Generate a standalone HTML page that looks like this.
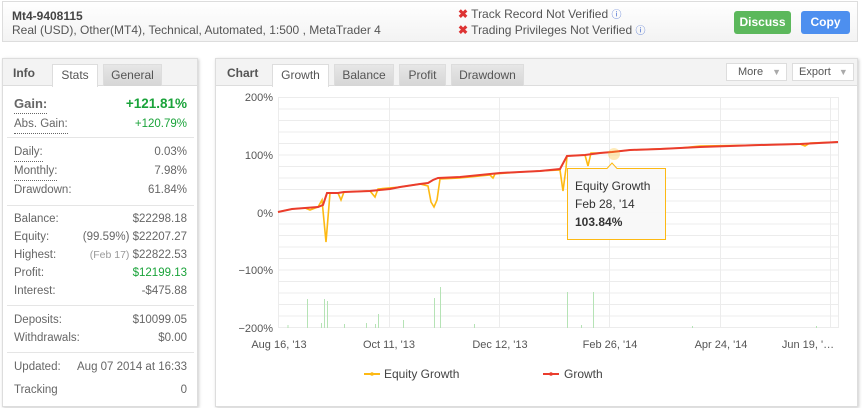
<!DOCTYPE html>
<html><head><meta charset="utf-8"><style>
*{box-sizing:border-box;margin:0;padding:0}
body{width:862px;height:408px;background:#fff;font-family:"Liberation Sans",Arial,sans-serif;font-size:12px;color:#555;position:relative;overflow:hidden}
.abs{position:absolute}
.hdr{left:2px;top:1px;width:856px;height:41px;border:1px solid #ddd;background:linear-gradient(#fff,#f3f3f3)}
.panel{border:1px solid #ddd;background:#fff;box-shadow:1px 1px 3px #ccc}
.tabbar{left:0;top:0;right:0;height:27px;background:#f3f3f3;border-bottom:1px solid #ddd}
.tab{position:absolute;top:5px;height:22px;background:linear-gradient(#e6e6e6,#d6d6d6);border:1px solid #ddd;border-bottom:none;text-align:center;line-height:21px;color:#555}
.tab.on{background:#fff;height:23px}
.row{position:absolute;left:11px;width:173px;height:18px;line-height:18px;font-size:11.5px}
.row .l{position:absolute;left:0;color:#666}
.row .r{position:absolute;right:0;color:#666}
.dot{border-bottom:1px dotted #666}
.sep{position:absolute;left:4px;width:187px;border-top:1px solid #e5e5e5}
.row .g{color:#1aa33a}
</style></head><body>
<div class="abs hdr">
 <div class="abs" style="left:9px;top:7px;font-weight:bold;font-size:12px;color:#444">Mt4-9408115</div>
 <div class="abs" style="left:9px;top:21px;font-size:12px;color:#555">Real (USD), Other(MT4), Technical, Automated, 1:500 , MetaTrader 4</div>
 <div class="abs" style="left:455px;top:4px;font-size:12px;color:#555"><span style="color:#d33;font-weight:bold">✖</span> Track Record Not Verified <span style="color:#4a6fd0;font-size:10px">ⓘ</span></div>
 <div class="abs" style="left:455px;top:20px;font-size:12px;color:#555"><span style="color:#d33;font-weight:bold">✖</span> Trading Privileges Not Verified <span style="color:#4a6fd0;font-size:10px">ⓘ</span></div>
 <div class="abs" style="left:731px;top:9px;width:57px;height:23px;background:#5cb85c;border-radius:3px;color:#fff;font-weight:bold;text-align:center;line-height:23px;font-size:12px">Discuss</div>
 <div class="abs" style="left:798px;top:9px;width:49px;height:23px;background:#4d8fef;border-radius:3px;color:#fff;font-weight:bold;text-align:center;line-height:23px;font-size:12px">Copy</div>
</div>

<div class="abs panel" style="left:2px;top:58px;width:196px;height:349px">
 <div class="abs tabbar"></div>
 <div class="abs" style="left:10px;top:7px;font-weight:bold;color:#555;font-size:12px">Info</div>
 <div class="tab on" style="left:49px;width:46px">Stats</div>
 <div class="tab" style="left:100px;width:59px">General</div>
 <div class="row" style="top:36px;height:20px"><span class="l dot" style="font-weight:bold;font-size:13px;color:#666;line-height:18px">Gain:</span><span class="r g" style="font-weight:bold;font-size:13.5px">+121.81%</span></div>
 <div class="row" style="top:56px"><span class="l dot">Abs. Gain:</span><span class="r g">+120.79%</span></div>
 <div class="sep" style="top:78px"></div>
 <div class="row" style="top:84px"><span class="l dot">Daily:</span><span class="r">0.03%</span></div>
 <div class="row" style="top:103px"><span class="l dot">Monthly:</span><span class="r">7.98%</span></div>
 <div class="row" style="top:122px"><span class="l">Drawdown:</span><span class="r">61.84%</span></div>
 <div class="sep" style="top:146px"></div>
 <div class="row" style="top:151px"><span class="l">Balance:</span><span class="r">$22298.18</span></div>
 <div class="row" style="top:169px"><span class="l">Equity:</span><span class="r">(99.59%) $22207.27</span></div>
 <div class="row" style="top:187px"><span class="l">Highest:</span><span class="r"><span style="color:#999;font-size:10.5px">(Feb 17)</span> $22822.53</span></div>
 <div class="row" style="top:205px"><span class="l">Profit:</span><span class="r g">$12199.13</span></div>
 <div class="row" style="top:223px"><span class="l">Interest:</span><span class="r">-$475.88</span></div>
 <div class="sep" style="top:246px"></div>
 <div class="row" style="top:252px"><span class="l">Deposits:</span><span class="r">$10099.05</span></div>
 <div class="row" style="top:270px"><span class="l">Withdrawals:</span><span class="r">$0.00</span></div>
 <div class="sep" style="top:293px"></div>
 <div class="row" style="top:299px"><span class="l">Updated:</span><span class="r">Aug 07 2014 at 16:33</span></div>
 <div class="row" style="top:322px"><span class="l">Tracking</span><span class="r">0</span></div>
</div>

<div class="abs panel" style="left:215px;top:58px;width:643px;height:349px">
 <div class="abs tabbar"></div>
 <div class="abs" style="left:11px;top:7px;font-weight:bold;color:#555">Chart</div>
 <div class="tab on" style="left:56px;width:57px">Growth</div>
 <div class="tab" style="left:118px;width:60px">Balance</div>
 <div class="tab" style="left:183px;width:47px">Profit</div>
 <div class="tab" style="left:235px;width:73px">Drawdown</div>
 <div class="abs" style="left:510px;top:4px;width:61px;height:18px;border:1px solid #ddd;background:#fff;line-height:16px;padding-left:11px;font-size:11px;color:#555">More <span style="color:#aaa;font-size:9px;margin-left:6px">▼</span></div>
 <div class="abs" style="left:576px;top:4px;width:62px;height:18px;border:1px solid #ddd;background:#fff;line-height:16px;padding-left:6px;font-size:11px;color:#555">Export <span style="color:#aaa;font-size:9px;margin-left:5px">▼</span></div>
</div>

<svg class="abs" style="left:0;top:0" width="862" height="408">
 <g stroke="#ececec" stroke-width="1">
  <line x1="278" y1="97.5" x2="838" y2="97.5"/><line x1="278" y1="109" x2="838" y2="109"/><line x1="278" y1="120.5" x2="838" y2="120.5"/><line x1="278" y1="132" x2="838" y2="132"/><line x1="278" y1="143.5" x2="838" y2="143.5"/><line x1="278" y1="155" x2="838" y2="155"/><line x1="278" y1="166.5" x2="838" y2="166.5"/><line x1="278" y1="178" x2="838" y2="178"/><line x1="278" y1="189.5" x2="838" y2="189.5"/><line x1="278" y1="201" x2="838" y2="201"/><line x1="278" y1="212.5" x2="838" y2="212.5"/><line x1="278" y1="224" x2="838" y2="224"/><line x1="278" y1="235.5" x2="838" y2="235.5"/><line x1="278" y1="247" x2="838" y2="247"/><line x1="278" y1="258.5" x2="838" y2="258.5"/><line x1="278" y1="270" x2="838" y2="270"/><line x1="278" y1="281.5" x2="838" y2="281.5"/><line x1="278" y1="293" x2="838" y2="293"/><line x1="278" y1="304.5" x2="838" y2="304.5"/><line x1="278" y1="316" x2="838" y2="316"/><line x1="278" y1="327.5" x2="838" y2="327.5"/>
  <line x1="278.5" y1="97" x2="278.5" y2="328"/><line x1="389.5" y1="97" x2="389.5" y2="328"/><line x1="499.5" y1="97" x2="499.5" y2="328"/><line x1="609.5" y1="97" x2="609.5" y2="328"/><line x1="720.5" y1="97" x2="720.5" y2="328"/><line x1="830.5" y1="97" x2="830.5" y2="328"/><line x1="838.5" y1="97" x2="838.5" y2="328"/>
 </g>
 <g stroke="#b5e3b5" stroke-width="1">
  <line x1="307.5" y1="328" x2="307.5" y2="299"/><line x1="321.5" y1="328" x2="321.5" y2="323"/><line x1="324.5" y1="328" x2="324.5" y2="299"/><line x1="327.5" y1="328" x2="327.5" y2="301"/><line x1="288" y1="328" x2="288" y2="325"/><line x1="344.5" y1="328" x2="344.5" y2="324"/><line x1="366.5" y1="328" x2="366.5" y2="323"/><line x1="375.5" y1="328" x2="375.5" y2="324"/><line x1="378.5" y1="328" x2="378.5" y2="314"/><line x1="403.5" y1="328" x2="403.5" y2="320"/><line x1="434.5" y1="328" x2="434.5" y2="298"/><line x1="440.5" y1="328" x2="440.5" y2="287"/><line x1="474.5" y1="328" x2="474.5" y2="324"/><line x1="567.5" y1="328" x2="567.5" y2="292"/><line x1="593.5" y1="328" x2="593.5" y2="292"/><line x1="581.5" y1="328" x2="581.5" y2="325"/><line x1="692.5" y1="328" x2="692.5" y2="326"/><line x1="816.5" y1="328" x2="816.5" y2="326"/>
 </g>
 <polyline fill="none" stroke="#fdb913" stroke-width="1.6" points="278,212 292,209 305,208 310,210 318,207 322,200 326,242 330,193 338,193 341,200 344,192 370,191 375,197 378,189 400,187 420,184 428,186 431,202 434,207 437,200 440,179 460,178 480,176 490,175 493,178 495,174 520,172 560,170 563,191 566,168 567,156 585,155 588,166 591,153 600,153 612,152 630,150 680,148 700,146 760,145 800,144 805,146 810,143 838,142"/>
 <polyline fill="none" stroke="#ea3c2c" stroke-width="2" points="278,212 292,209 305,208 318,207 323,205 327,193 338,193 344,192 370,191 390,189 400,187 420,184 428,183 433,180 438,178 460,177 480,175 500,173 520,172 540,171 560,169 567,156 585,155 600,153 612,152 630,150 660,149 700,147 760,145 800,144 838,142"/>
 <circle cx="614" cy="154" r="6" fill="#fdb913" opacity=".3"/>
 <g font-family="Liberation Sans,Arial,sans-serif" font-size="11" fill="#555" text-anchor="end">
  <text x="273" y="101">200%</text><text x="273" y="159">100%</text><text x="273" y="217">0%</text><text x="273" y="274">−100%</text><text x="273" y="332">−200%</text>
 </g>
 <g font-family="Liberation Sans,Arial,sans-serif" font-size="11" fill="#555" text-anchor="middle">
  <text x="279" y="348">Aug 16, '13</text><text x="389" y="348">Oct 11, '13</text><text x="500" y="348">Dec 12, '13</text><text x="610" y="348">Feb 26, '14</text><text x="721" y="348">Apr 24, '14</text><text x="808" y="348">Jun 19, '…</text>
 </g>
 <line x1="364" y1="374" x2="380" y2="374" stroke="#fdb913" stroke-width="2"/><circle cx="372" cy="374" r="1.8" fill="#fdb913"/>
 <text x="384" y="378" font-family="Liberation Sans,Arial,sans-serif" font-size="12" fill="#444">Equity Growth</text>
 <line x1="543" y1="374" x2="559" y2="374" stroke="#ea3c2c" stroke-width="2"/><circle cx="551" cy="374" r="1.8" fill="#ea3c2c"/>
 <text x="564" y="378" font-family="Liberation Sans,Arial,sans-serif" font-size="12" fill="#444">Growth</text>
 <path d="M567.5,168.5 H607 L612,163 L617,168.5 H665.5 V239.5 H567.5 Z" fill="#f8f8f8" fill-opacity=".95" stroke="#fdb913" stroke-width="1"/>
 <g font-family="Liberation Sans,Arial,sans-serif" font-size="12" fill="#333">
  <text x="575" y="190">Equity Growth</text><text x="575" y="208">Feb 28, '14</text><text x="575" y="226" font-weight="bold">103.84%</text>
 </g>
</svg>
</body></html>
